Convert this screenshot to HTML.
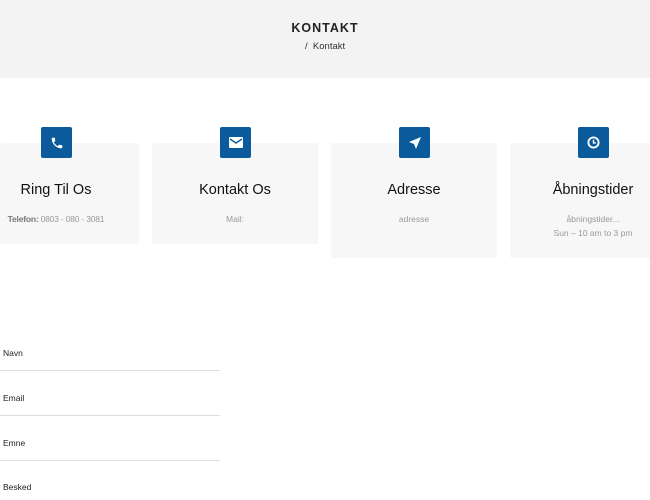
<!DOCTYPE html><html><head><style>
body{margin:0;width:650px;height:500px;overflow:hidden;background:#fff;font-family:"Liberation Sans",sans-serif;position:relative}
.hd{position:absolute;left:0;top:0;width:650px;height:78px;background:#f3f3f3}
.t{position:absolute;top:21px;width:650px;text-align:center;font-weight:bold;font-size:12.5px;letter-spacing:1px;color:#222}
.bc{position:absolute;top:41px;left:305px;font-size:9.5px;color:#333}
.card{position:absolute;top:143px;background:#f7f7f7;border-radius:2px;text-align:center}
.card h3{margin:0;position:absolute;top:39px;width:100%;font-weight:normal;font-size:14.5px;color:#111}
.card p{margin:0;position:absolute;top:69px;width:100%;font-size:8.5px;color:#999;line-height:14px;white-space:nowrap}
.ic{position:absolute;top:127px;width:31px;height:31px;background:#0a5a9c;border-radius:2px;display:flex;align-items:center;justify-content:center}
.f{position:absolute;left:0;width:220px;border-bottom:1px solid #ddd;font-size:8.5px;color:#222;padding-left:3px;box-sizing:border-box}
</style></head><body>
<div class="hd"><div class="t">KONTAKT</div><div class="bc">/ &nbsp;Kontakt</div></div>
<div class="card" style="left:0;width:139px;height:101px"><h3 style="width:112px">Ring Til Os</h3><p style="width:112px;letter-spacing:-0.2px"><b style="color:#777">Telefon:</b> 0803 - 080 - 3081</p></div>
<div class="card" style="left:152px;width:166px;height:101px"><h3>Kontakt Os</h3><p>Mail:</p></div>
<div class="card" style="left:331px;width:166px;height:115px"><h3>Adresse</h3><p>adresse</p></div>
<div class="card" style="left:510px;width:166px;height:115px"><h3 style="width:166px">Åbningstider</h3><p>åbningstider...<br>Sun – 10 am to 3 pm</p></div>
<div class="ic" style="left:41px"><svg width="14" height="14" viewBox="0 0 24 24"><path fill="#fff" d="M6.6 10.8c1.4 2.8 3.8 5.1 6.6 6.6l2.2-2.2c.3-.3.7-.4 1-.2 1.1.4 2.3.6 3.6.6.6 0 1 .4 1 1V20c0 .6-.4 1-1 1C10.6 21 3 13.4 3 4c0-.6.4-1 1-1h3.5c.6 0 1 .4 1 1 0 1.3.2 2.5.6 3.6.1.3 0 .7-.2 1z"/></svg></div>
<div class="ic" style="left:220px"><svg width="14" height="11" viewBox="0 0 14 11"><rect width="14" height="11" rx="1" fill="#fff"/><path d="M1 2l6 4 6-4" stroke="#0a5a9c" stroke-width="1.4" fill="none"/></svg></div>
<div class="ic" style="left:399px"><svg width="12" height="12" viewBox="0 0 12 12"><path fill="#fff" d="M12 0L0 5l5 2 2 5z"/></svg></div>
<div class="ic" style="left:578px"><svg width="13" height="13" viewBox="0 0 14 14"><circle cx="7" cy="7" r="5.5" fill="none" stroke="#fff" stroke-width="2"/><path d="M7 4v3.5h2.5" stroke="#fff" stroke-width="1.5" fill="none"/></svg></div>
<div class="f" style="top:348px;height:23px">Navn</div>
<div class="f" style="top:393px;height:23px">Email</div>
<div class="f" style="top:438px;height:23px">Emne</div>
<div class="f" style="top:482px;border:0">Besked</div>
</body></html>
